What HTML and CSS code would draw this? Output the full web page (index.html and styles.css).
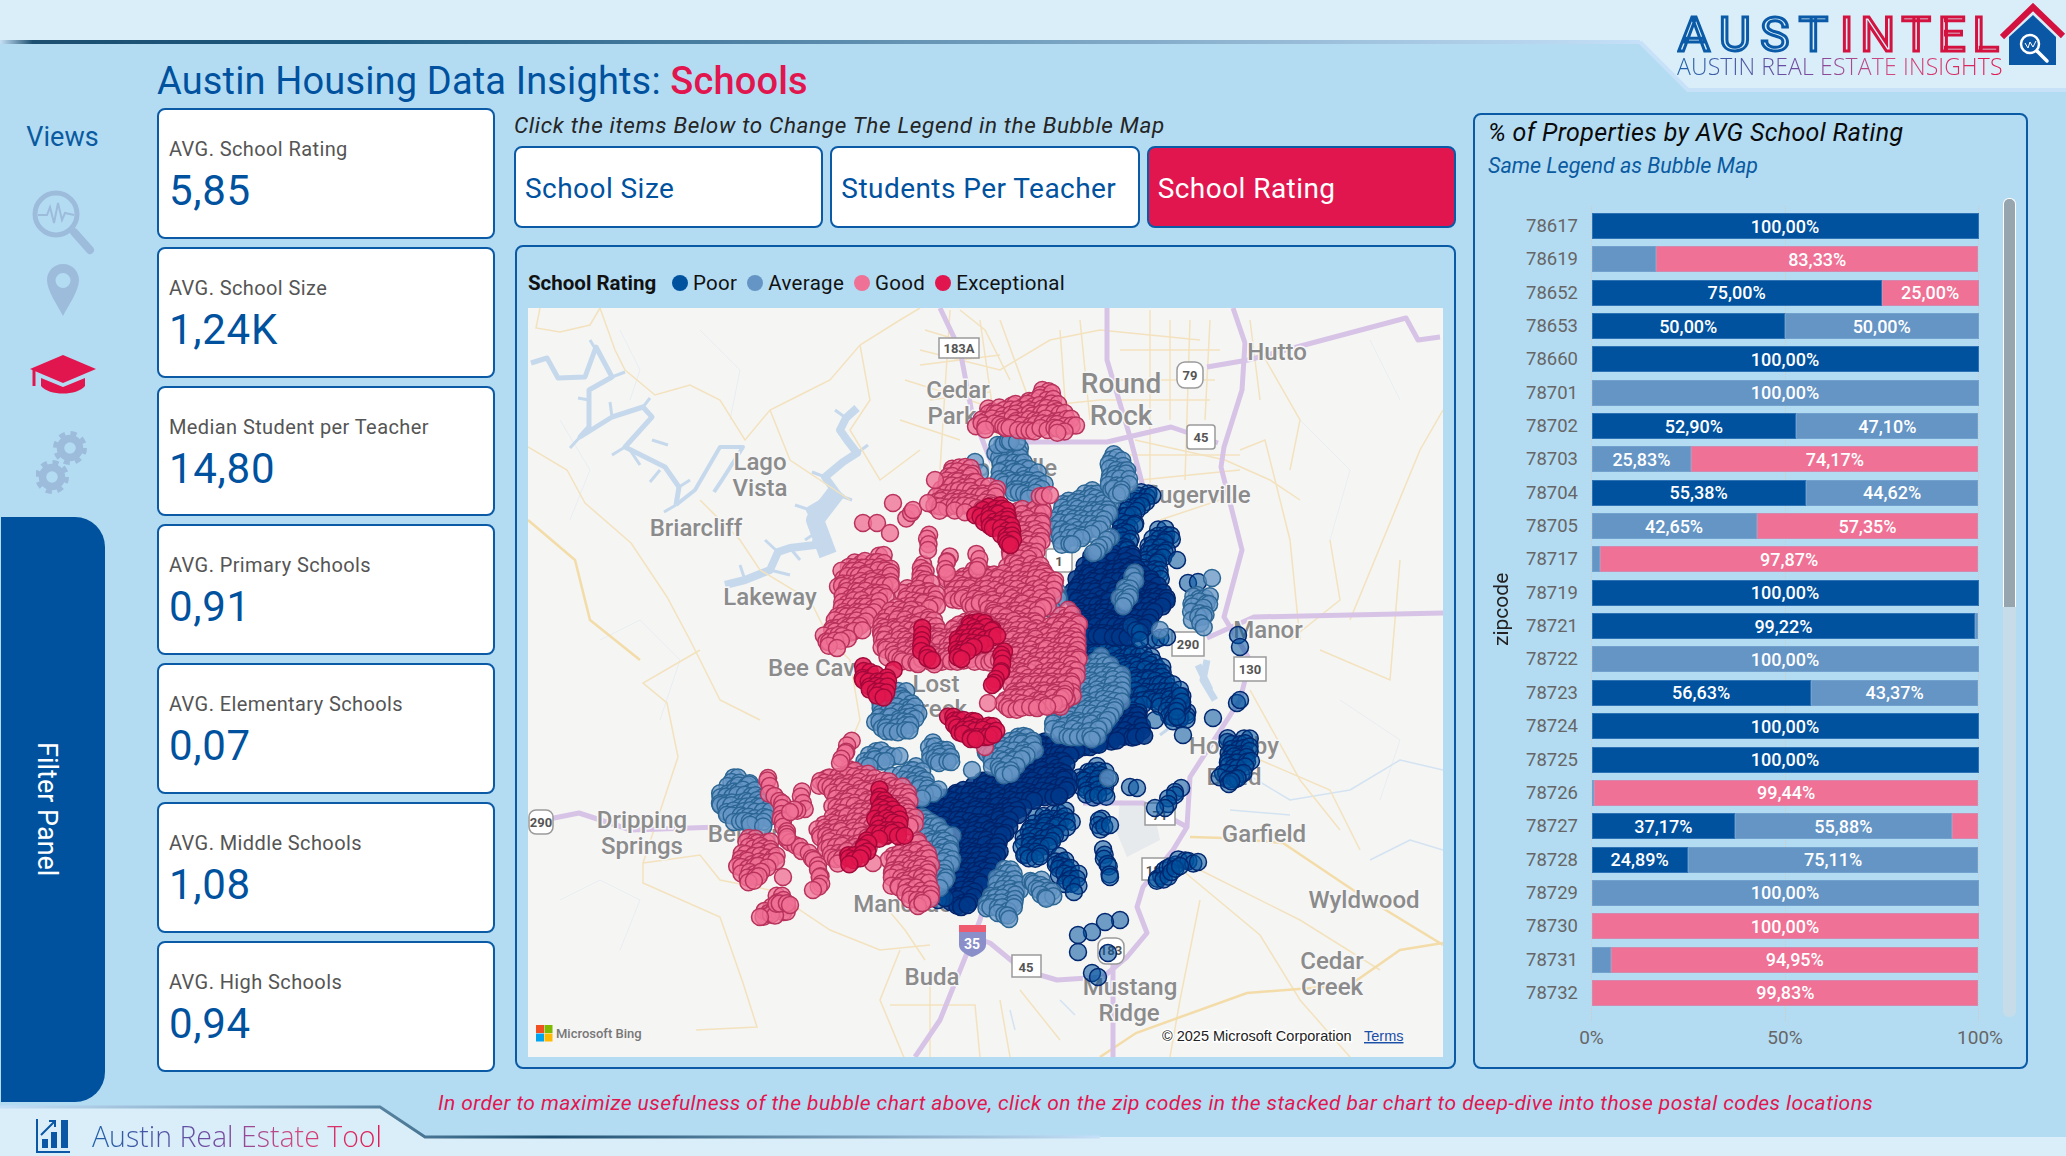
FILE: index.html
```html
<!DOCTYPE html>
<html lang="en">
<head>
  <meta charset="UTF-8" />
  <title>Austin Housing Data Insights: Schools</title>
  <link rel="stylesheet" href="styles.css">
</head>
<body>
  <div class="page">
    <svg class="frame" viewBox="0 0 2066 1156" width="2066" height="1156">
      <defs>
        <linearGradient id="linea-top" x1="0" x2="1640" y1="0" y2="0" gradientUnits="userSpaceOnUse">
          <stop offset="0" stop-color="#c5e0f5" />
          <stop offset="0.02" stop-color="#1d4f70" />
          <stop offset="0.22" stop-color="#1d5a80" />
          <stop offset="1" stop-color="#c5e0f8" />
        </linearGradient>
        <linearGradient id="linea-bottom" x1="0" x2="1100" y1="0" y2="0" gradientUnits="userSpaceOnUse">
          <stop offset="0" stop-color="#c5e0f8" />
          <stop offset="0.33" stop-color="#5d88a5" />
          <stop offset="0.5" stop-color="#1d4f70" />
          <stop offset="1" stop-color="#c5e0f8" />
        </linearGradient>
      </defs>
      <path class="band" d="M0 0H2066V90H1688L1640 42H0Z" />
      <path class="band-edge" d="M1640 42L1688 90H2066" />
      <path d="M0 42H1640" stroke="url(#linea-top)" stroke-width="4" fill="none" />
      <path class="band" d="M0 1107H380L425 1137H2066V1156H0Z" />
      <path d="M0 1107H380L425 1137H1100" stroke="url(#linea-bottom)" stroke-width="3" fill="none" />
    </svg>

    <header class="top">
      <h1 class="titulo">Austin Housing Data Insights: <span class="rojo">Schools</span></h1>
      <div class="logo">
        <svg class="logo-marca" viewBox="0 0 330 70" width="330" height="70">
          <text class="logo-azul" x="1" y="51" textLength="150" lengthAdjust="spacing">AUST</text>
          <text class="logo-rojo" x="163" y="51" textLength="159" lengthAdjust="spacing">INTEL</text>
        </svg>
        <div class="logo-sub">AUSTIN REAL ESTATE INSIGHTS</div>
        <svg class="logo-casa" viewBox="0 0 66 66" width="66" height="66">
          <path d="M9 34L33 12L56 34V62H9Z" fill="#0a57a5" />
          <path d="M2 34L33 4L63 33" fill="none" stroke="#d3123f" stroke-width="6" />
          <circle cx="30" cy="41" r="9" fill="#0a57a5" stroke="#fff" stroke-width="2.5" />
          <path d="M37 48L47 58" stroke="#fff" stroke-width="3.5" stroke-linecap="round" />
          <path d="M25 40L28 45L30 39L33 44L36 38" fill="none" stroke="#fff" stroke-width="1" />
        </svg>
      </div>
    </header>

    <div class="cuerpo">
      <aside class="lateral">
        <nav class="vistas">
          <div class="vistas-titulo">Views</div>
          <svg class="ico ico-lupa" viewBox="0 0 66 66" width="66" height="66">
            <circle cx="26" cy="25" r="21" fill="none" stroke="#9dbcdc" stroke-width="5" />
            <path d="M8 26H17L20 18L24 34L28 14L32 31L35 24L44 26" fill="none" stroke="#9dbcdc" stroke-width="2" />
            <path d="M44 43L60 61" stroke="#9dbcdc" stroke-width="8" stroke-linecap="round" />
          </svg>
          <svg class="ico ico-pin" viewBox="0 0 34 54" width="34" height="54">
            <path fill-rule="evenodd" d="M17 0C7 0 1 8 1 16C1 27 12 42 17 52C22 42 33 27 33 16C33 8 27 0 17 0ZM17 9A7.5 7.5 0 1 1 17 24A7.5 7.5 0 1 1 17 9Z" fill="#9dbcdc" />
          </svg>
          <svg class="ico ico-gorro" viewBox="0 0 68 40" width="68" height="40">
            <path d="M34 0L67 14L34 28L1 14Z" fill="#e2164f" />
            <path d="M12 23L34 32L56 23V31C48 41 20 41 12 31Z" fill="#e2164f" />
            <path d="M5 15V31" stroke="#e2164f" stroke-width="3" />
          </svg>
          <svg class="ico ico-tuercas" viewBox="0 0 54 64" width="54" height="64">
            <g fill="none" stroke="#9dbcdc">
              <circle cx="34" cy="18" r="9.5" stroke-width="7.5" />
              <circle cx="34" cy="18" r="14.5" stroke-width="5" stroke-dasharray="6 5.4" />
              <circle cx="16" cy="47" r="9.5" stroke-width="7.5" />
              <circle cx="16" cy="47" r="14.5" stroke-width="5" stroke-dasharray="6 5.4" />
            </g>
          </svg>
        </nav>
        <div class="filtro"><span>Filter Panel</span></div>
      </aside>

      <section class="tarjetas">
        <div class="tarjeta"><div class="etiqueta">AVG. School Rating</div><div class="valor">5,85</div></div>
        <div class="tarjeta"><div class="etiqueta">AVG. School Size</div><div class="valor">1,24K</div></div>
        <div class="tarjeta"><div class="etiqueta">Median Student per Teacher</div><div class="valor">14,80</div></div>
        <div class="tarjeta"><div class="etiqueta">AVG. Primary Schools</div><div class="valor">0,91</div></div>
        <div class="tarjeta"><div class="etiqueta">AVG. Elementary Schools</div><div class="valor">0,07</div></div>
        <div class="tarjeta"><div class="etiqueta">AVG. Middle Schools</div><div class="valor">1,08</div></div>
        <div class="tarjeta"><div class="etiqueta">AVG. High Schools</div><div class="valor">0,94</div></div>
      </section>

      <section class="centro">
        <p class="ayuda">Click the items Below to Change The Legend in the Bubble Map</p>
        <div class="botones">
          <button class="boton">School Size</button>
          <button class="boton">Students Per Teacher</button>
          <button class="boton activo">School Rating</button>
        </div>
        <div class="panel-mapa">
          <div class="leyenda">
            <strong>School Rating</strong>
            <span class="item"><i class="punto poor"></i>Poor</span>
            <span class="item"><i class="punto average"></i>Average</span>
            <span class="item"><i class="punto good"></i>Good</span>
            <span class="item"><i class="punto exceptional"></i>Exceptional</span>
          </div>
          <div class="mapa">
            <svg viewBox="528 308 915 749" width="915" height="749">
              <rect x="528" y="308" width="915" height="749" fill="#f5f5f4" />
              <path d="M1120 800L1153 807L1160 840L1127 857L1117 833Z" fill="#e6eaed" />
              <g class="relieve">
                <path d="M620 330L640 370L630 400M560 420L590 470L570 520M700 330L740 370L730 420M600 640L640 620L680 660L660 720M560 900L600 880L640 900L620 950M1300 420L1350 470L1330 540M1370 340L1400 400M1340 700L1400 740L1380 800" />
              </g>
              <g class="agua">
                <path d="M531 363L547 358L558 378L585 377L596 347L612 377L589 390L589 427L580 437L612 417L643 407L652 417L625 447L665 467L679 487L676 505" stroke-width="5" />
                <path d="M596 350L590 340M612 377L625 372M589 400L578 398M580 437L570 448M612 417L610 402M643 407L650 398M625 447L612 455M652 440L668 445M679 487L690 480M660 470L650 482M676 505L664 512M630 450L640 465" stroke-width="3" />
                <path d="M676 505L695 490L720 447L743 447L722 480L714 492" stroke-width="4" />
                <path d="M857 408L846 418L840 430L847 440L857 453L843 462L825 477L838 495L822 503L810 510L820 530L815 545L790 548L778 552L770 570L745 580L725 585" stroke-width="8" />
                <path d="M846 418L835 410M857 453L868 445M825 477L812 472M810 510L795 505M778 552L765 540M770 570L790 575M745 580L740 565M820 530L805 540M790 548L800 560M838 495L852 500" stroke-width="3" />
                <path d="M838 490L815 520L828 555" stroke-width="18" />
                <path d="M1207 660L1203 680L1215 700M1198 665L1210 690" stroke-width="7" />
                <path d="M1160 735L1180 720M1130 745L1150 740" stroke-width="3" />
                <path class="rio" d="M1240 770L1290 800L1350 790L1400 760L1443 770M1230 810L1290 815M1370 860L1410 840L1443 850M1060 1000L1075 1015M1010 1010L1015 1030" />
              </g>
              <g class="calles">
                <path d="M540 308L536 328L560 332L590 325L600 308" />
                <path d="M600 308L615 350L625 370L655 395L690 385L720 400L745 440L770 410L800 395L830 380L860 345L900 320L920 308" />
                <path d="M528 447L567 470L585 503L631 543L667 597L690 640L720 700L760 720" />
                <path d="M700 650L643 683L667 703L678 757L643 863L643 883L720 917L743 983L757 1027L696 1030" />
                <path d="M700 500L740 540L760 570L810 600L830 640L850 660L860 720L830 790" />
                <path d="M770 410L790 460L850 500M960 310L985 330L1010 380M860 345L870 400L850 430L880 480L920 450" />
                <path d="M643 863L700 855L720 880L770 890L830 930L880 950L930 945" />
                <path d="M900 950L880 1000L905 1060M930 985V1057M890 1005H975L980 1057" />
                <path d="M880 900L905 930L925 960M1020 990L1060 1040M1170 860L1260 935L1300 1000L1350 1057" />
                <path d="M1200 870L1300 920L1380 970M1260 760L1330 790L1360 850M1320 650L1390 680L1400 560M1350 620L1420 450L1443 410" />
                <path d="M920 350L1000 370L1050 340L1100 330L1200 340M905 380L1000 410L1100 400L1210 400M900 420L960 440M950 310L940 470M980 320L1000 460M1060 330L1065 400M1150 310V490M1190 320L1185 480M1250 320L1260 400" />
                <path d="M925 330L975 345M920 365L1000 355M930 400L990 392M1000 320L1040 430M1080 320L1090 420M1120 350H1220M1115 380H1215M1130 455H1240M1170 320V420M1210 320L1205 420M1260 350L1300 420L1290 470" />
                <path d="M1135 440L1225 460L1270 480L1300 500M1140 480L1240 470M1160 520L1220 500M1240 450L1265 440L1290 540L1300 640" />
                <path d="M1250 690L1300 780L1340 830M1290 640L1340 600L1330 540M1200 900L1180 1000L1170 1057M1000 1000L1010 1057" />
              </g>
              <path class="calle-fuerte" d="M1283 843L1353 890L1443 945M1443 943L1400 950L1350 985L1247 993L1136 1033L1100 1057M1190 837L1225 838L1283 843M528 520L575 560L590 620L640 660" />
              <g class="autopistas">
                <path d="M940 308L960 350L972 413L989 457L1000 480" />
                <path d="M1107 308V360L1130 437L1142 483L1125 540L1130 600" />
                <path d="M1040 660L1060 720L1020 780L1000 850L980 920L967 953L940 1020L915 1057" />
                <path d="M1233 308L1245 343L1242 390L1224 447L1221 467L1242 550L1224 617L1250 660L1240 700L1190 777L1187 827L1173 850L1143 887L1137 907L1147 933L1127 957L1103 977L1057 980L1023 970L990 943L973 937" />
                <path d="M1025 442H1107L1171 427L1218 443" />
                <path d="M1207 367L1248 360L1406 318L1418 340L1440 337" />
                <path d="M1207 638L1254 617L1443 613" />
                <path d="M529 823L579 813L631 830L719 827" />
                <path d="M1083 803H1143L1187 827" />
                <path d="M1113 950L1113 1057" />
              </g>
              <g class="lugares">
                <text x="1277" y="360">Hutto</text>
                <text x="958" y="398">Cedar</text><text x="952" y="424">Park</text>
                <text class="grande" x="1121" y="393">Round</text><text class="grande" x="1121" y="425">Rock</text>
                <text x="1010" y="476">Jollyville</text>
                <text x="1190" y="503">Pflugerville</text>
                <text x="760" y="470">Lago</text><text x="760" y="496">Vista</text>
                <text x="696" y="536">Briarcliff</text>
                <text x="770" y="605">Lakeway</text>
                <text x="818" y="676">Bee Cave</text>
                <text x="936" y="692">Lost</text><text x="936" y="717">Creek</text>
                <text x="1268" y="638">Manor</text>
                <text x="1234" y="754">Hornsby</text><text x="1234" y="785">Bend</text>
                <text x="642" y="828">Dripping</text><text x="642" y="854">Springs</text>
                <text x="750" y="842">Belterra</text>
                <text x="1264" y="842">Garfield</text>
                <text x="1364" y="908">Wyldwood</text>
                <text x="1332" y="969">Cedar</text><text x="1332" y="995">Creek</text>
                <text x="932" y="985">Buda</text>
                <text x="909" y="912">Manchaca</text>
                <text x="1130" y="995">Mustang</text><text x="1129" y="1021">Ridge</text>
              </g>
              <g class="escudos">
                <rect x="939" y="338" width="40" height="20" /><text x="959" y="353">183A</text>
                <rect x="1177" y="362" width="26" height="26" rx="8" /><text x="1190" y="380">79</text>
                <rect x="1187" y="425" width="28" height="24" rx="3" /><text x="1201" y="442">45</text>
                <rect x="1046" y="549" width="26" height="23" rx="3" /><text x="1059" y="566">1</text>
                <rect x="1172" y="632" width="32" height="24" /><text x="1188" y="649">290</text>
                <rect x="1234" y="657" width="32" height="24" /><text x="1250" y="674">130</text>
                <rect x="529" y="810" width="24" height="24" rx="7" /><text x="541" y="827">290</text>
                <rect x="1012" y="955" width="29" height="22" /><text x="1026" y="972">45</text>
                <rect x="1145" y="803" width="30" height="22" /><text x="1160" y="820">71</text>
                <rect x="1142" y="858" width="30" height="22" /><text x="1157" y="875">183</text>
                <rect x="1098" y="938" width="26" height="26" rx="8" /><text x="1111" y="955">183</text>
              </g>
              <path d="M959 925H986V945C986 951 977 955 972 957C967 955 959 951 959 945Z" fill="#8a8fca" />
              <rect x="959" y="925" width="27" height="7" fill="#ef5a6e" />
              <text class="escudo-i" x="972" y="949">35</text>
              <g id="burbujas"></g>
              <g class="bing">
                <rect x="536" y="1025" width="8" height="8" fill="#f25022" />
                <rect x="544.5" y="1025" width="8" height="8" fill="#7fba00" />
                <rect x="536" y="1033.500" width="8" height="8" fill="#00a4ef" />
                <rect x="544.5" y="1033.500" width="8" height="8" fill="#ffb900" />
                <text x="556" y="1038">Microsoft Bing</text>
              </g>
              <text class="copy" x="1162" y="1041">© 2025 Microsoft Corporation</text>
              <text class="terminos" x="1364" y="1041">Terms</text>
            </svg>
          </div>
        </div>
      </section>

      <section class="panel-barras">
        <div class="barras-titulo">% of Properties by AVG School Rating</div>
        <div class="barras-sub">Same Legend as Bubble Map</div>
        <div class="grafico">
          <div class="eje-y">zipcode</div>
          <div class="zona">
            <div id="filas" class="filas"></div>
            <div class="eje-x"><span>0%</span><span>50%</span><span>100%</span></div>
            <i class="guia g0"></i><i class="guia g50"></i><i class="guia g100"></i>
          </div>
          <div class="scroll"><div class="scroll-barra"></div></div>
        </div>
      </section>
    </div>

    <footer class="pie">
      <div class="herramienta">
        <svg viewBox="0 0 36 36" width="36" height="36">
          <path d="M2 1V34H35" fill="none" stroke="#0a57a5" stroke-width="2" />
          <path d="M7 30V21H13V30ZM16 30V14H22V30ZM26 30V2H33V30Z" fill="#0a57a5" />
          <path d="M6 17L20 3M14 3H20V9" fill="none" stroke="#0a57a5" stroke-width="2" />
        </svg>
        <span class="herramienta-texto">Austin Real Estate Tool</span>
      </div>
      <p class="nota">In order to maximize usefulness of the bubble chart above, click on the zip codes in the stacked bar chart to deep-dive into those postal codes locations</p>
    </footer>
  </div>
  <script src="script.js"></script>
</body>
</html>
```

FILE: styles.css
```css
* {
  box-sizing: border-box;
}
body {
  margin: 0;
  font-family: Roboto, "Liberation Sans", sans-serif;
  background-color: #b3dcf3;
  color: #333;
}
.page {
  position: relative;
  width: 2066px;
  height: 1156px;
  overflow: hidden;
}
.frame {
  position: absolute;
  top: 0;
  left: 0;
}
.band {
  fill: #d9eef9;
}
.band-edge {
  fill: none;
  stroke: #c7e2f8;
  stroke-width: 4;
}

/* cabecera */
.top {
  position: relative;
  display: flex;
  justify-content: space-between;
  height: 108px;
  padding-left: 157px;
}
.titulo {
  margin: 58px 0 0;
  font-size: 38px;
  line-height: 46px;
  font-weight: 400;
  color: #00529f;
  letter-spacing: 0.15px;
}
.rojo {
  color: #e2164f;
  font-weight: 500;
}
.logo {
  position: relative;
  width: 389px;
  height: 90px;
}
.logo-marca {
  position: absolute;
  top: 0;
  left: 0;
  font-size: 49px;
  font-weight: 400;
}
.logo-azul {
  fill: #d9eef9;
  stroke: #0a5aa8;
  stroke-width: 3;
}
.logo-rojo {
  fill: #d9eef9;
  stroke: #d3123f;
  stroke-width: 3;
}
.logo-sub {
  position: absolute;
  top: 50px;
  left: 0;
  font-family: "Open Sans", sans-serif;
  font-size: 23px;
  font-weight: 300;
  white-space: nowrap;
  letter-spacing: 0.15px;
  color: transparent;
  background: linear-gradient(90deg, #1f5fa8, #7a4a9f 40%, #d0487f 65%, #e2164f);
  -webkit-background-clip: text;
  background-clip: text;
}
.logo-casa {
  position: absolute;
  top: 3px;
  right: 0;
}

.cuerpo {
  position: relative;
  display: flex;
  height: 994px;
}

/* barra lateral */
.lateral {
  width: 105px;
  display: flex;
  flex-direction: column;
}
.vistas {
  height: 409px;
  padding-left: 20px;
  display: flex;
  flex-direction: column;
  align-items: center;
}
.vistas-titulo {
  margin-top: 14px;
  font-size: 27px;
  line-height: 30px;
  color: #0a5aa0;
}
.ico {
  display: block;
}
.ico-lupa {
  margin-top: 37px;
}
.ico-pin {
  margin-top: 9px;
}
.ico-gorro {
  margin-top: 37px;
}
.ico-tuercas {
  margin-top: 35px;
}
.filtro {
  height: 585px;
  margin-left: 1px;
  background-color: #00529f;
  border-radius: 0 30px 30px 0;
  display: flex;
  align-items: center;
  justify-content: center;
  padding-right: 12px;
}
.filtro span {
  writing-mode: vertical-rl;
  color: #fff;
  font-size: 27px;
}

/* tarjetas */
.tarjetas {
  width: 338px;
  margin-left: 52px;
  display: flex;
  flex-direction: column;
  gap: 8px;
}
.tarjeta {
  height: 130.800px;
  background: #fff;
  border: 2px solid #0a5aa5;
  border-radius: 8px;
  padding: 26px 0 0 10px;
}
.etiqueta {
  font-size: 20px;
  line-height: 26px;
  color: #555;
  letter-spacing: 0.4px;
}
.valor {
  margin-top: 4px;
  font-size: 42px;
  line-height: 50px;
  color: #00529f;
  letter-spacing: 0.7px;
}

/* centro */
.centro {
  width: 942px;
  margin-left: 19px;
}
.ayuda {
  margin: 4px 0 0;
  height: 34px;
  font-size: 22.500px;
  line-height: 26px;
  font-style: italic;
  color: #252525;
  white-space: nowrap;
  letter-spacing: 0.65px;
}
.botones {
  display: flex;
  gap: 7px;
}
.boton {
  flex: 1;
  height: 82px;
  background: #fff;
  border: 2px solid #0a5aa5;
  border-radius: 8px;
  padding: 2px 0 0 9px;
  text-align: left;
  font-family: inherit;
  font-size: 28px;
  color: #00529f;
  white-space: nowrap;
  letter-spacing: 0.45px;
}
.activo {
  background: #e2164f;
  color: #fff;
}
.panel-mapa {
  margin: 17px 0 0 1px;
  height: 824px;
  border: 2px solid #0a5aa5;
  border-radius: 8px;
  padding: 0 11px;
}
.leyenda {
  display: flex;
  align-items: center;
  height: 61px;
  padding-top: 11px;
  font-size: 20.500px;
  color: #111;
}
.leyenda strong {
  width: 144px;
  font-weight: 700;
  white-space: nowrap;
}
.item {
  display: flex;
  align-items: center;
  margin-right: 10px;
  letter-spacing: 0.3px;
}
.punto {
  width: 16px;
  height: 16px;
  border-radius: 50%;
  margin-right: 5px;
}
.poor {
  background: #00529f;
}
.average {
  background: #6595c5;
}
.good {
  background: #ef7195;
}
.exceptional {
  background: #e2164f;
}
.mapa {
  height: 749px;
}
.mapa svg {
  display: block;
}
.relieve path {
  fill: none;
  stroke: #e9edf2;
  stroke-width: 1;
}
.agua path {
  fill: none;
  stroke: #c6d9ec;
  stroke-linejoin: round;
}
.agua .rio {
  stroke: #d4e3f1;
  stroke-width: 1.5;
}
.calles path {
  fill: none;
  stroke: #f3e2bd;
  stroke-width: 1.5;
}
.calle-fuerte {
  fill: none;
  stroke: #f3dca8;
  stroke-width: 2.5;
}
.autopistas path {
  fill: none;
  stroke: #d7c3e6;
  stroke-width: 5;
  stroke-linejoin: round;
}
.lugares text {
  font-size: 24px;
  font-weight: 500;
  fill: #8b8b8b;
  text-anchor: middle;
  paint-order: stroke;
  stroke: #f7f7f7;
  stroke-width: 3px;
}
.lugares .grande {
  font-size: 28px;
}
.escudos rect {
  fill: #fff;
  stroke: #9a9a9a;
  stroke-width: 1.5;
}
.escudos text {
  font-size: 13px;
  font-weight: 700;
  fill: #555;
  text-anchor: middle;
}
.escudo-i {
  font-size: 14px;
  font-weight: 700;
  fill: #fff;
  text-anchor: middle;
}
.bing text {
  font-size: 13px;
  font-weight: 500;
  fill: #777;
}
.copy {
  font-family: "Liberation Sans", sans-serif;
  font-size: 14.500px;
  fill: #222;
  paint-order: stroke;
  stroke: #fff;
  stroke-width: 3px;
}
.terminos {
  font-family: "Liberation Sans", sans-serif;
  font-size: 14.500px;
  fill: #1a4fa8;
  text-decoration: underline;
}

/* barras */
.panel-barras {
  position: relative;
  width: 555px;
  height: 956px;
  margin: 5px 0 0 17px;
  border: 2px solid #0a5aa5;
  border-radius: 8px;
}
.barras-titulo {
  margin: 3px 0 0 13px;
  font-size: 25px;
  line-height: 30px;
  font-style: italic;
  color: #0a0a0a;
  letter-spacing: 0.35px;
}
.barras-sub {
  margin: 5px 0 0 13px;
  font-size: 21.500px;
  line-height: 26px;
  font-style: italic;
  color: #0a5aa0;
}
.grafico {
  position: relative;
  display: flex;
  margin-top: 34px;
}
.eje-y {
  writing-mode: vertical-rl;
  transform: rotate(180deg);
  width: 24px;
  margin: 356px 0 0 14px;
  height: 80px;
  font-size: 21px;
  color: #222;
  text-align: center;
}
.zona {
  position: relative;
  margin-left: 23px;
  width: 451px;
}
.filas {
  display: flex;
  flex-direction: column;
  gap: 7.350px;
}
.fila {
  position: relative;
  z-index: 1;
  display: flex;
  align-items: center;
  height: 26px;
}
.zip {
  width: 51px;
  margin-left: -10px;
  margin-right: 14.500px;
  text-align: right;
  font-size: 18.500px;
  color: #666;
  white-space: nowrap;
}
.barra {
  display: flex;
  width: 387px;
  height: 26px;
}
.tramo {
  display: flex;
  align-items: center;
  justify-content: center;
  color: #fff;
  font-size: 18px;
  font-weight: 500;
  overflow: hidden;
}
.tramo.poor, .tramo.average, .tramo.good {
  box-shadow: inset 0 0 0 1px rgba(150, 190, 230, 0.3);
}
.eje-x {
  position: relative;
  height: 32px;
  margin-top: 20px;
  font-size: 19px;
  color: #666;
}
.eje-x span {
  position: absolute;
  top: 0;
  transform: translateX(-50%);
}
.eje-x span:nth-child(1) {
  left: 55.500px;
}
.eje-x span:nth-child(2) {
  left: 249px;
}
.eje-x span:nth-child(3) {
  left: 444px;
}
.guia {
  position: absolute;
  top: -7px;
  height: 815px;
  border-left: 1px dotted #c9ccc9;
  z-index: 0;
}
.g0 {
  left: 55px;
}
.g50 {
  left: 249px;
}
.g100 {
  left: 442px;
}
.scroll {
  position: absolute;
  top: -15px;
  left: 528px;
  width: 13px;
  height: 819px;
  background: #c6dde9;
  border-radius: 6px;
}
.scroll-barra {
  height: 409px;
  background: #97a6ae;
  border: 1px solid #fff;
  border-bottom: none;
  border-radius: 6px 6px 0 0;
}

/* pie */
.pie {
  position: relative;
  height: 54px;
}
.herramienta {
  position: absolute;
  top: 0;
  left: 35px;
  display: flex;
  align-items: center;
  gap: 21px;
  height: 54px;
  padding-top: 14px;
}
.herramienta-texto {
  font-family: "Open Sans", sans-serif;
  font-size: 28.500px;
  font-weight: 300;
  color: transparent;
  white-space: nowrap;
  background: linear-gradient(90deg, #1f5fa8, #7a4a9f 45%, #d0487f 70%, #e2164f);
  -webkit-background-clip: text;
  background-clip: text;
}
.nota {
  position: absolute;
  top: -12px;
  left: 438px;
  margin: 0;
  font-size: 21px;
  line-height: 26px;
  font-style: italic;
  color: #e2164f;
  white-space: nowrap;
  letter-spacing: 0.43px;
}
```

FILE: script.js
```js
// filas del grafico: [zip, poor, average, good]
const filas = [
  ["78617", 100, 0, 0], ["78619", 0, 16.67, 83.33], ["78652", 75, 0, 25], ["78653", 50, 50, 0],
  ["78660", 100, 0, 0], ["78701", 0, 100, 0], ["78702", 52.9, 47.1, 0], ["78703", 0, 25.83, 74.17],
  ["78704", 55.38, 44.62, 0], ["78705", 0, 42.65, 57.35], ["78717", 0, 2.13, 97.87], ["78719", 100, 0, 0],
  ["78721", 99.22, 0.78, 0], ["78722", 0, 100, 0], ["78723", 56.63, 43.37, 0], ["78724", 100, 0, 0],
  ["78725", 100, 0, 0], ["78726", 0, 0.56, 99.44], ["78727", 37.17, 55.88, 6.95], ["78728", 24.89, 75.11, 0],
  ["78729", 0, 100, 0], ["78730", 0, 0, 100], ["78731", 0, 5.05, 94.95], ["78732", 0, 0.17, 99.83]
];
const clases = ["poor", "average", "good"];

document.getElementById("filas").innerHTML = filas.map((f) => {
  const tramos = f.slice(1).map((p, i) => {
    if (!p) return "";
    const texto = p >= 20 ? p.toFixed(2).replace(".", ",") + "%" : "";
    return `<div class="tramo ${clases[i]}" style="width:${p}%">${texto}</div>`;
  }).join("");
  return `<div class="fila"><div class="zip">${f[0]}</div><div class="barra">${tramos}</div></div>`;
}).join("");

// burbujas del mapa
const colores = {
  poor: ["#00529f", "#00276f", 0.55],
  poorDenso: ["#00388a", "#00236a", 0.85],
  average: ["#6595c5", "#2c6694", 0.75],
  good: ["#ef7195", "#b8325c", 0.78],
  exceptional: ["#e2164f", "#a3083a", 0.85]
};
let semilla = 7;
function azar() {
  semilla = (semilla * 16807) % 2147483647;
  return semilla / 2147483647;
}
function dentro(x, y, pol) {
  let si = false;
  for (let i = 0, j = pol.length - 1; i < pol.length; j = i++) {
    const a = pol[i], b = pol[j];
    if ((a[1] > y) !== (b[1] > y) && x < ((b[0] - a[0]) * (y - a[1])) / (b[1] - a[1]) + a[0]) si = !si;
  }
  return si;
}
function circulo(t, x, y) {
  const c = colores[t];
  return `<circle cx="${x.toFixed(1)}" cy="${y.toFixed(1)}" r="8.5" fill="${c[0]}" fill-opacity="${c[2]}" stroke="${c[1]}" stroke-width="1.5"/>`;
}
// region rellena de burbujas, algo mas ancha que el poligono
function mancha(t, base) {
  let s = "";
  const cx = base.reduce((a, p) => a + p[0], 0) / base.length;
  const cy = base.reduce((a, p) => a + p[1], 0) / base.length;
  const pol = base.map((p) => [cx + (p[0] - cx) * 1.12, cy + (p[1] - cy) * 1.12]);
  const xs = pol.map((p) => p[0]), ys = pol.map((p) => p[1]);
  for (let y = Math.min(...ys); y <= Math.max(...ys); y += 5) {
    for (let x = Math.min(...xs); x <= Math.max(...xs); x += 6) {
      const px = x + azar() * 4 - 2, py = y + azar() * 4 - 2;
      if (dentro(px, py, pol)) s += circulo(t, px, py);
    }
  }
  return s;
}
// hilera de burbujas
function hilera(t, pts, paso) {
  let s = "";
  for (let i = 0; i < pts.length - 1; i++) {
    const a = pts[i], b = pts[i + 1];
    const n = Math.max(1, Math.round(Math.hypot(b[0] - a[0], b[1] - a[1]) / (paso || 5)));
    for (let k = 0; k < n; k++) {
      s += circulo(t, a[0] + ((b[0] - a[0]) * k) / n + azar() * 4 - 2, a[1] + ((b[1] - a[1]) * k) / n + azar() * 4 - 2);
    }
  }
  const u = pts[pts.length - 1];
  return s + circulo(t, u[0], u[1]);
}
function sueltas(t, pts) {
  return pts.map((p) => circulo(t, p[0], p[1])).join("");
}

const manchasDensas = [
  [[1093, 557], [1130, 557], [1143, 577], [1170, 600], [1153, 613], [1133, 633], [1090, 633], [1077, 603], [1077, 587]],
  [[927, 805], [977, 787], [1000, 777], [1043, 743], [1090, 737], [1107, 707], [1137, 733], [1133, 743], [1093, 750], [1067, 760], [1067, 793], [1023, 807], [1010, 830], [997, 860], [983, 887], [973, 900], [950, 887], [960, 840]]
];
const manchasPoor = [
  [[1120, 513], [1133, 503], [1143, 490], [1153, 498], [1137, 513], [1130, 547], [1113, 550]],
  [[1163, 527], [1173, 537], [1163, 557], [1163, 577], [1143, 570], [1147, 543]],
  [[1090, 637], [1117, 643], [1153, 660], [1167, 677], [1187, 713], [1173, 723], [1153, 700], [1133, 717], [1100, 700]],
  [[1037, 817], [1063, 810], [1070, 823], [1037, 860], [1020, 853], [1023, 837]],
  [[1060, 857], [1083, 877], [1073, 893], [1050, 867]],
  [[1100, 763], [1110, 777], [1107, 797], [1090, 797], [1077, 780]],
  [[1223, 740], [1248, 740], [1250, 770], [1227, 783], [1217, 773], [1230, 750]]
];
const hilerasPoor = [
  [[1100, 817], [1100, 830], [1110, 825]],
  [[1103, 850], [1110, 877]],
  [[1180, 787], [1170, 797], [1165, 808]],
  [[1157, 877], [1180, 860], [1198, 862]],
  [[1158, 882], [1180, 866]],
  [[1183, 707], [1182, 690], [1177, 717]],
  [[1150, 640], [1167, 637]],
  [[1130, 627], [1140, 632]]
];
const sueltasPoor = [[1188, 583], [1198, 582], [1130, 787], [1137, 788], [1237, 703], [1240, 700], [1238, 635], [938, 900], [945, 898], [1140, 640], [1155, 720], [1183, 735], [1213, 718], [1155, 808], [1120, 920], [1105, 922], [1092, 932], [1078, 935], [1078, 952], [1108, 953], [1092, 973], [1098, 977], [1240, 647], [1177, 560]];

const manchasAverage = [
  [[997, 443], [1017, 442], [1023, 460], [1047, 483], [1027, 497], [1000, 483], [997, 460]],
  [[1060, 507], [1093, 492], [1110, 507], [1100, 527], [1067, 547], [1053, 530]],
  [[1118, 452], [1128, 467], [1130, 483], [1117, 497], [1105, 483], [1110, 460]],
  [[1135, 570], [1137, 583], [1127, 613], [1120, 597]],
  [[1198, 590], [1210, 597], [1203, 627], [1188, 617], [1190, 597]],
  [[1083, 665], [1100, 660], [1120, 675], [1120, 700], [1093, 737], [1053, 730], [1060, 713], [1080, 700]],
  [[983, 753], [1023, 733], [1037, 747], [1007, 777], [987, 760]],
  [[903, 690], [917, 713], [907, 737], [877, 727], [877, 703]],
  [[880, 747], [900, 757], [873, 767], [860, 763]],
  [[930, 740], [950, 753], [953, 767], [930, 760]],
  [[917, 767], [937, 790], [920, 800], [907, 783], [893, 777]],
  [[923, 817], [953, 837], [950, 870], [940, 890], [930, 860]],
  [[733, 775], [757, 790], [770, 807], [763, 827], [730, 820], [718, 800]],
  [[1000, 873], [1013, 867], [1020, 897], [1010, 917], [987, 907], [993, 887]],
  [[1037, 877], [1057, 893], [1043, 900], [1030, 883]],
  [[1057, 587], [1063, 590], [1047, 630]]
];
const hilerasAverage = [[[1110, 537], [1093, 553]], [[997, 443], [1017, 442]]];
const sueltasAverage = [[975, 462], [980, 473], [1212, 578], [1160, 630], [972, 770], [1108, 778]];

const manchasGood = [
  [[980, 425], [993, 408], [1020, 405], [1045, 388], [1053, 403], [1072, 425], [1053, 433], [1007, 427], [987, 430]],
  [[957, 465], [970, 465], [975, 483], [995, 487], [990, 510], [940, 510], [933, 502], [947, 480]],
  [[1007, 557], [1013, 517], [1040, 513], [1043, 543], [1033, 563], [1053, 580], [1047, 603], [1033, 613], [1040, 637], [1013, 643], [993, 610], [957, 597], [953, 577], [977, 570], [1007, 573]],
  [[922, 563], [913, 587], [903, 590], [907, 610], [943, 607], [933, 587]],
  [[843, 570], [880, 557], [890, 567], [893, 580], [880, 603], [863, 627], [837, 647], [823, 637], [843, 610], [840, 587]],
  [[887, 633], [900, 610], [940, 617], [947, 637], [967, 623], [1000, 617], [1033, 633], [1048, 623], [1060, 613], [1070, 617], [1070, 653], [1068, 690], [1052, 703], [1013, 697], [1003, 663], [967, 660], [930, 663], [897, 657]],
  [[1003, 697], [1070, 690], [1060, 705], [1010, 712]],
  [[817, 787], [853, 773], [903, 790], [910, 823], [877, 837], [857, 853], [840, 860], [823, 843], [818, 830], [833, 813], [833, 797]],
  [[890, 857], [920, 843], [930, 860], [930, 900], [917, 903], [893, 887]],
  [[747, 840], [767, 840], [777, 860], [763, 870], [753, 887], [738, 867]],
  [[780, 893], [793, 913], [770, 917], [760, 917]]
];
const hilerasGood = [
  [[907, 517], [913, 510]], [[978, 555], [977, 570]], [[948, 555], [947, 573]], [[928, 535], [928, 550]],
  [[850, 742], [840, 763]], [[1040, 495], [1050, 495]],
  [[767, 777], [770, 793], [783, 803], [780, 817], [790, 843], [813, 857], [823, 883], [813, 890]],
  [[802, 792], [803, 808], [790, 812]], [[775, 905], [790, 905]]
];
const sueltasGood = [[935, 480], [893, 503], [928, 503], [863, 523], [877, 523], [890, 533], [988, 703], [985, 747], [873, 863], [783, 877], [787, 837], [760, 917]];

const manchasExc = [
  [[973, 518], [990, 507], [1007, 507], [1013, 537], [1008, 547], [997, 530], [980, 520]],
  [[953, 642], [972, 620], [993, 627], [997, 637], [973, 650], [960, 660]],
  [[860, 663], [880, 677], [895, 668], [883, 697], [867, 690]],
  [[950, 717], [973, 720], [997, 727], [990, 737], [967, 740]],
  [[877, 790], [897, 813], [903, 837], [863, 840], [847, 857], [853, 863], [873, 847]]
];
const hilerasExc = [
  [[923, 628], [923, 650], [932, 660]],
  [[1003, 650], [1002, 670], [992, 685]]
];

let html = "";
manchasPoor.forEach((m) => (html += mancha("poor", m)));
manchasDensas.forEach((m) => (html += mancha("poorDenso", m)));
hilerasPoor.forEach((h) => (html += hilera("poor", h)));
html += sueltas("poor", sueltasPoor);
manchasAverage.forEach((m) => (html += mancha("average", m)));
hilerasAverage.forEach((h) => (html += hilera("average", h)));
html += sueltas("average", sueltasAverage);
manchasGood.forEach((m) => (html += mancha("good", m)));
hilerasGood.forEach((h) => (html += hilera("good", h)));
html += sueltas("good", sueltasGood);
manchasExc.forEach((m) => (html += mancha("exceptional", m)));
hilerasExc.forEach((h) => (html += hilera("exceptional", h)));
document.getElementById("burbujas").innerHTML = html;
```
